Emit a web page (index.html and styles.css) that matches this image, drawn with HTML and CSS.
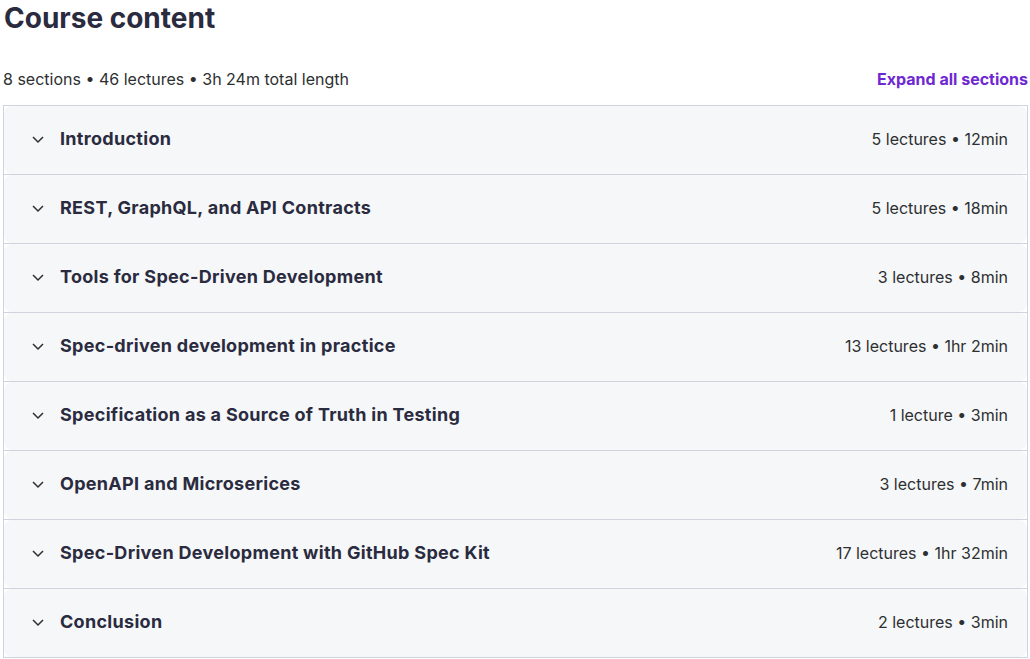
FILE: index.html
```html
<!DOCTYPE html>
<html>
<head>
<meta charset="utf-8">
<link rel="stylesheet" href="styles.css">
</head>
<body>
<div class="page">
  <h2 class="title">Course content</h2>
  <div class="meta-row">
    <span class="meta">8 sections • 46 lectures • 3h 24m total length</span>
    <button class="expand">Expand all sections</button>
  </div>
  <div class="sections">
    <div class="section"><div class="panel"><svg class="chev" viewBox="0 0 14 14"><polyline points="2,5 7,10 12,5"/></svg><span class="stitle">Introduction</span><span class="sinfo">5 lectures • 12min</span></div></div>
    <div class="section"><div class="panel"><svg class="chev" viewBox="0 0 14 14"><polyline points="2,5 7,10 12,5"/></svg><span class="stitle">REST, GraphQL, and API Contracts</span><span class="sinfo">5 lectures • 18min</span></div></div>
    <div class="section"><div class="panel"><svg class="chev" viewBox="0 0 14 14"><polyline points="2,5 7,10 12,5"/></svg><span class="stitle">Tools for Spec-Driven Development</span><span class="sinfo">3 lectures • 8min</span></div></div>
    <div class="section"><div class="panel"><svg class="chev" viewBox="0 0 14 14"><polyline points="2,5 7,10 12,5"/></svg><span class="stitle">Spec-driven development in practice</span><span class="sinfo">13 lectures • 1hr 2min</span></div></div>
    <div class="section"><div class="panel"><svg class="chev" viewBox="0 0 14 14"><polyline points="2,5 7,10 12,5"/></svg><span class="stitle">Specification as a Source of Truth in Testing</span><span class="sinfo">1 lecture • 3min</span></div></div>
    <div class="section"><div class="panel"><svg class="chev" viewBox="0 0 14 14"><polyline points="2,5 7,10 12,5"/></svg><span class="stitle">OpenAPI and Microserices</span><span class="sinfo">3 lectures • 7min</span></div></div>
    <div class="section"><div class="panel"><svg class="chev" viewBox="0 0 14 14"><polyline points="2,5 7,10 12,5"/></svg><span class="stitle">Spec-Driven Development with GitHub Spec Kit</span><span class="sinfo">17 lectures • 1hr 32min</span></div></div>
    <div class="section"><div class="panel"><svg class="chev" viewBox="0 0 14 14"><polyline points="2,5 7,10 12,5"/></svg><span class="stitle">Conclusion</span><span class="sinfo">2 lectures • 3min</span></div></div>
  </div>
</div>
</body>
</html>
```
FILE: styles.css
```css
html, body {
  margin: 0;
  padding: 0;
  background: #ffffff;
}
body {
  font-family: Inter, "Noto Sans", sans-serif;
  color: #2d2f31;
}
.page {
  width: 1025px;
  padding-left: 3px;
}
.title {
  margin: 0;
  padding: 1px 0 0 1px;
  height: 36px;
  line-height: 34px;
  font-size: 28px;
  font-weight: 700;
  color: #2a2b3f;
}
.meta-row {
  display: flex;
  justify-content: space-between;
  align-items: center;
  height: 68px;
  padding-top: 16px;
  box-sizing: border-box;
}
.meta {
  font-size: 16px;
  color: #2d2f31;
}
.expand {
  border: 0;
  background: none;
  padding: 0;
  font-family: inherit;
  font-size: 16px;
  font-weight: 700;
  color: #6d28d2;
  cursor: pointer;
}
.sections {
  border: 1px solid #d1d2e0;
}
.section {
  border-top: 1px solid #d1d2e0;
}
.section:first-child {
  border-top: 0;
}
.panel {
  display: flex;
  align-items: center;
  height: 68px;
  background: #f6f7f9;
  border-radius: 8px;
  padding: 0 19px 3px 27px;
  box-sizing: border-box;
}
.chev {
  width: 14px;
  height: 14px;
  fill: none;
  stroke: #2d2f31;
  stroke-width: 1.5;
  flex: none;
}
.stitle {
  margin-left: 15px;
  font-size: 18px;
  font-weight: 700;
  letter-spacing: 0.3px;
  color: #2a2b3f;
  flex: 1;
}
.sinfo {
  font-size: 16px;
  color: #2d2f31;
}
```
